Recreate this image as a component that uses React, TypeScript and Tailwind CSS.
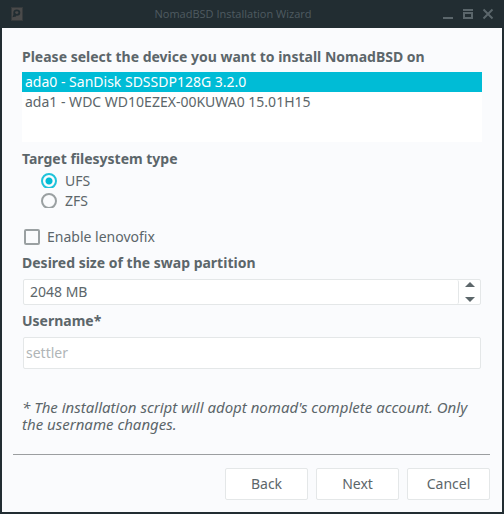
import { useState } from "react";

const devices = [
  "ada0 - SanDisk SDSSDP128G 3.2.0",
  "ada1 - WDC WD10EZEX-00KUWA0 15.01H15",
];

const filesystems = ["UFS", "ZFS"];

const actions = ["Back", "Next", "Cancel"];

function TitleBar() {
  return (
    <header className="flex h-7 items-center bg-[#222d32] px-2.5 text-[#4f5b61]">
      <svg width="14" height="14" viewBox="0 0 14 14" aria-hidden="true">
        <rect x="1.500" y="0.5" width="11" height="13" fill="#4a4a4a" stroke="#363a3c" />
        <ellipse cx="6.800" cy="5.600" rx="2.600" ry="2.300" fill="none" stroke="#222d32" strokeWidth="1.800" />
        <path d="M4.600 6.500 3.600 9.200 6 8.800" fill="none" stroke="#222d32" strokeWidth="1.500" />
      </svg>
      <h1 className="flex-1 text-center font-['Open_Sans',sans-serif] text-[11px] leading-5">
        NomadBSD Installation Wizard
      </h1>
      <div className="flex gap-2">
        <button type="button" aria-label="Minimize">
          <svg width="12" height="12" viewBox="0 0 12 12" shapeRendering="crispEdges">
            <path d="M1 9h10v2H1z" fill="#5b666b" />
          </svg>
        </button>
        <button type="button" aria-label="Maximize">
          <svg width="12" height="12" viewBox="0 0 12 12" shapeRendering="crispEdges">
            <path d="M1 1h10v2H1zM1 4h10v7H1zM3 6v3h6V6z" fill="#5b666b" fillRule="evenodd" />
          </svg>
        </button>
        <button type="button" aria-label="Close">
          <svg width="12" height="12" viewBox="0 0 12 12">
            <path d="M1.500 1.500l9 9M10.500 1.500l-9 9" stroke="#5b666b" strokeWidth="2" />
          </svg>
        </button>
      </div>
    </header>
  );
}

export default function App() {
  const [device, setDevice] = useState(0);
  const [fs, setFs] = useState("UFS");
  const [swap, setSwap] = useState(2048);

  return (
    <div className="bg-[#222d32] font-['Noto_Sans',sans-serif] text-sm leading-5 text-[#5c666a]">
      <TitleBar />
      <div className="px-0.5 pb-0.5">
        <form className="bg-[#fafbfd] pb-3 pt-[19px]" onSubmit={(e) => e.preventDefault()}>
          <div className="px-5">
            <h2 id="device-label" className="font-bold">
              Please select the device you want to install NomadBSD on
            </h2>
            <div role="listbox" aria-labelledby="device-label" className="mt-[5px] flex h-[70px] flex-col bg-white">
              {devices.map((name, i) => (
                <button
                  key={name}
                  type="button"
                  role="option"
                  aria-selected={device === i}
                  onClick={() => setDevice(i)}
                  className={
                    device === i
                      ? "bg-[#00bcd6] px-[3px] text-left text-white"
                      : "px-[3px] text-left"
                  }
                >
                  {name}
                </button>
              ))}
            </div>

            <fieldset className="mt-[7px]">
              <legend className="font-bold">Target filesystem type</legend>
              <div className="mt-0.5 flex flex-col items-start pl-[19px]">
                {filesystems.map((name) => (
                  <label key={name} className="flex items-center gap-2">
                    <input
                      type="radio"
                      name="filesystem"
                      checked={fs === name}
                      onChange={() => setFs(name)}
                      className="size-4 appearance-none rounded-full border-2 border-[#9aa0a2] bg-origin-border [clip-path:inset(0_0_1px_0)] checked:border-[#1fc3da] checked:bg-[radial-gradient(circle,#00bcd6_3px,transparent_4px)]"
                    />
                    {name}
                  </label>
                ))}
              </div>
            </fieldset>

            <label className="mt-4 flex items-center gap-[7px]">
              <input
                type="checkbox"
                className="ml-0.5 size-4 appearance-none rounded-xs border-2 border-[#9aa0a2] checked:bg-[#00bcd6]"
              />
              Enable lenovofix
            </label>

            <label htmlFor="swap" className="mt-1.5 block font-bold">
              Desired size of the swap partition
            </label>
            <div className="mx-px mt-1.5 flex h-[26px] rounded-xs border border-[#e4e7e8] bg-white">
              <input
                id="swap"
                value={`${swap} MB`}
                readOnly
                className="min-w-0 flex-1 rounded-r-xs border-r border-[#e4e7e8] px-1.5"
              />
              <div className="flex w-[21px] flex-col items-center justify-between py-0.5">
                <button type="button" aria-label="Increase" onClick={() => setSwap(swap + 1)}>
                  <svg width="10" height="5" viewBox="0 0 10 5" className="block">
                    <path d="M5 0l5 5H0z" fill="#5c666a" />
                  </svg>
                </button>
                <button type="button" aria-label="Decrease" onClick={() => setSwap(Math.max(0, swap - 1))}>
                  <svg width="10" height="5" viewBox="0 0 10 5" className="block">
                    <path d="M0 0h10L5 5z" fill="#5c666a" />
                  </svg>
                </button>
              </div>
            </div>

            <label htmlFor="username" className="mt-1.5 block font-bold">
              Username*
            </label>
            <div className="mx-px mt-1.5 flex h-8 rounded-xs border border-[#e4e7e8] bg-white">
              <input
                id="username"
                placeholder="settler"
                className="min-w-0 flex-1 px-0.5 placeholder:text-[#b0b5b7]"
              />
            </div>

            <p className="mt-[30px] text-[15px] italic leading-[17px]">
              * The installation script will adopt nomad's complete account. Only the username changes.
            </p>
          </div>

          <hr className="ml-[11px] mr-3 mt-[21px] border-[#9b9ea0]" />

          <div className="mt-[13px] flex justify-end gap-2 px-3">
            {actions.map((name) => (
              <button key={name} type="button" className="h-8 w-[83px] rounded-xs border border-[#e4e7e8] bg-white">
                {name}
              </button>
            ))}
          </div>
        </form>
      </div>
    </div>
  );
}
